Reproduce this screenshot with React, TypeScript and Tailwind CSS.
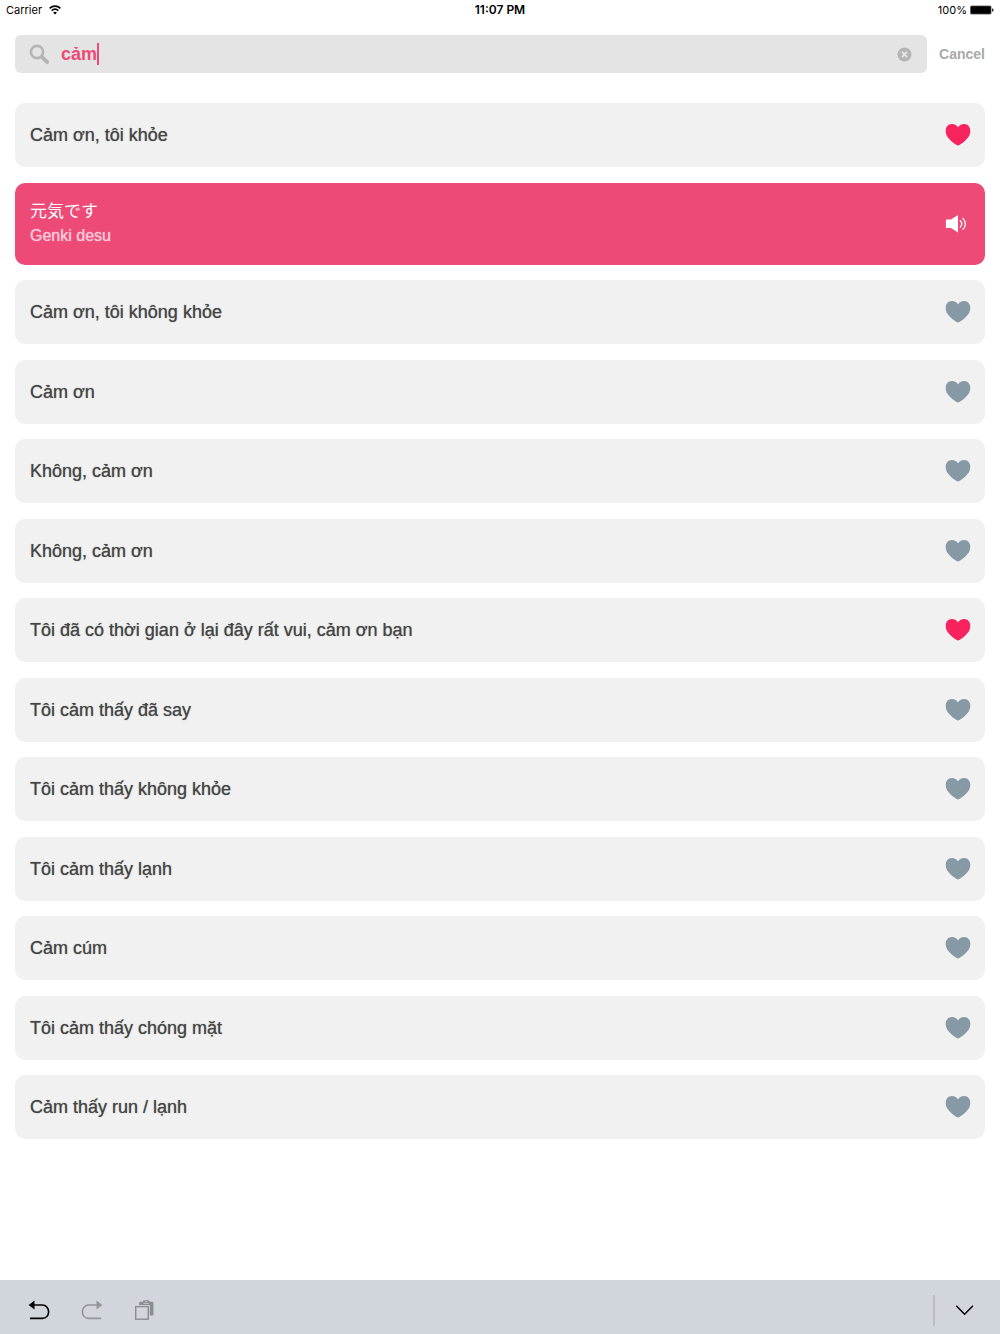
import React, { useState } from 'react';

interface Phrase {
  id: number;
  text: string;
  favorite: boolean;
  translation?: { native: string; romaji: string };
}

const initialPhrases: Phrase[] = [
  {
    id: 1,
    text: 'Cảm ơn, tôi khỏe',
    favorite: true,
    translation: { native: '元気です', romaji: 'Genki desu' },
  },
  { id: 2, text: 'Cảm ơn, tôi không khỏe', favorite: false },
  { id: 3, text: 'Cảm ơn', favorite: false },
  { id: 4, text: 'Không, cảm ơn', favorite: false },
  { id: 5, text: 'Không, cảm ơn', favorite: false },
  { id: 6, text: 'Tôi đã có thời gian ở lại đây rất vui, cảm ơn bạn', favorite: true },
  { id: 7, text: 'Tôi cảm thấy đã say', favorite: false },
  { id: 8, text: 'Tôi cảm thấy không khỏe', favorite: false },
  { id: 9, text: 'Tôi cảm thấy lạnh', favorite: false },
  { id: 10, text: 'Cảm cúm', favorite: false },
  { id: 11, text: 'Tôi cảm thấy chóng mặt', favorite: false },
  { id: 12, text: 'Cảm thấy run / lạnh', favorite: false },
];

const HeartIcon: React.FC = () => (
  <svg width="26" height="24" viewBox="0 0 26 24" fill="currentColor" aria-hidden="true">
    <path d="M13 22.6C11.6 22.2 8.2 20 5.4 17.2C2.4 14.2 .7 11.6 .7 7.9C.7 3.8 3.2 1 6.9 1C9.8 1 11.9 2.4 13 4.6C14.1 2.4 16.2 1 19.1 1C22.8 1 25.3 3.8 25.3 7.9C25.3 11.6 23.6 14.2 20.6 17.2C17.8 20 14.4 22.2 13 22.6Z" />
  </svg>
);

const StatusBar: React.FC = () => (
  <div className="grid h-5 grid-cols-3 items-center px-1.5 font-[Inter,sans-serif] text-[11px] leading-5 text-black">
    <div className="flex items-center gap-[7px]">
      <span>Carrier</span>
      <svg width="12" height="10" viewBox="0 0 12 10" fill="none" stroke="currentColor" strokeWidth="1.6" aria-hidden="true">
        <path d="M.6 3.4C3.7.4 8.3.4 11.4 3.4" />
        <path d="M2.6 5.6C4.6 3.8 7.4 3.8 9.4 5.6" />
        <path d="M6 9.4L4.1 7.4C5.2 6.4 6.8 6.4 7.9 7.4Z" fill="currentColor" stroke="none" />
      </svg>
    </div>
    <span className="text-center text-xs leading-5 font-semibold">11:07 PM</span>
    <div className="flex items-center justify-end gap-0.5">
      <span>100%</span>
      <svg width="25" height="10" viewBox="0 0 25 10" aria-hidden="true">
        <rect x="1" y=".5" width="21.5" height="9" rx="1.5" fill="#777" />
        <rect x="1.8" y="1.2" width="20" height="7.6" rx="1" fill="#000" />
        <path d="M23.2 3.2C25 3.6 25 6.4 23.2 6.8Z" fill="#000" />
      </svg>
    </div>
  </div>
);

const SearchBar: React.FC<{ value: string; onChange: (value: string) => void }> = ({ value, onChange }) => (
  <div className="mt-[15px] flex items-center gap-3">
    <label className="flex h-[38px] flex-1 items-center rounded-md bg-[#e4e4e4] pr-[15px] pl-3.5">
      <svg className="text-[#b4b4b4]" width="21" height="21" viewBox="0 0 21 21" fill="none" stroke="currentColor" aria-hidden="true">
        <circle cx="8" cy="8" r="6.1" strokeWidth="2.6" />
        <path d="M12.8 12.8L18.2 18.2" strokeWidth="3.8" strokeLinecap="round" />
      </svg>
      <input
        type="text"
        aria-label="Search"
        value={value}
        onChange={(e) => onChange(e.target.value)}
        className="ml-[11px] field-sizing-content bg-transparent text-lg leading-6 font-bold text-[#ed4a77] caret-transparent outline-none"
      />
      <span className="h-[22px] w-0.5 bg-[#ed4a77]" />
      <button type="button" aria-label="Clear" onClick={() => onChange('')} className="ml-auto">
        <svg width="15" height="15" viewBox="0 0 15 15" aria-hidden="true">
          <circle cx="7.5" cy="7.5" r="7" fill="#b4b4b4" />
          <path d="M4.9 4.9L10.1 10.1M10.1 4.9L4.9 10.1" stroke="#e8e8e8" strokeWidth="1.7" />
        </svg>
      </button>
    </label>
    <button type="button" onClick={() => onChange('')} className="text-sm leading-5 font-bold text-[#a9a9a9]">
      Cancel
    </button>
  </div>
);

const PhraseRow: React.FC<{ phrase: Phrase; onToggle: (id: number) => void }> = ({ phrase, onToggle }) => (
  <li className="flex min-h-16 items-center justify-between rounded-[10px] bg-[#f1f1f1] pr-3.5 pl-[15px]">
    <span className="text-lg leading-6 font-medium text-[#444] [text-shadow:0_0_1px_#777]">{phrase.text}</span>
    <button
      type="button"
      aria-label="Favorite"
      aria-pressed={phrase.favorite}
      onClick={() => onToggle(phrase.id)}
      className={phrase.favorite ? 'text-[#f6235f]' : 'text-[#8799a5]'}
    >
      <HeartIcon />
    </button>
  </li>
);

const TranslationRow: React.FC<{ native: string; romaji: string }> = ({ native, romaji }) => (
  <li className="flex min-h-[82px] items-center justify-between rounded-[10px] bg-[#ed4a77] pr-[18px] pl-[15px] text-white">
    <div className="flex flex-col gap-0.5 pb-0.5">
      <p lang="ja" className="font-['Noto_Sans_CJK_JP',sans-serif] text-[17px] leading-6">
        {native}
      </p>
      <p className="text-base leading-6 text-[#fbc9d7] [text-shadow:0_0_1px_#fbc9d7]">{romaji}</p>
    </div>
    <button type="button" aria-label="Play">
      <svg width="22" height="20" viewBox="0 0 22 20" fill="none" stroke="currentColor" strokeWidth="1.3" strokeLinecap="round" aria-hidden="true">
        <path d="M2 5.5H6L13 1V18.6L6 14H2C1.3 14 .9 13.6 .9 12.9V6.6C.9 5.9 1.3 5.5 2 5.5Z" fill="currentColor" stroke="none" />
        <path d="M15.3 6.8C17 8.6 17 11.2 15.3 13" />
        <path d="M17.8 4.4C21.2 7.6 21.2 12.2 17.8 15.4" />
      </svg>
    </button>
  </li>
);

const KeyboardBar: React.FC = () => (
  <footer className="flex h-[54px] items-center bg-[#d1d5dc] pt-1.5 pr-[25px] pl-7">
    <button type="button" aria-label="Undo" className="text-black">
      <svg width="22" height="20" viewBox="0 0 22 20" fill="none" stroke="currentColor" strokeWidth="1.6" aria-hidden="true">
        <path d="M5 5H14.3C18 5 20.6 8 20.6 11.8C20.6 15.6 18 18.4 14.3 18.4H2" />
        <path d="M6.5 .6V9.4L.6 5Z" fill="currentColor" stroke="none" />
      </svg>
    </button>
    <button type="button" aria-label="Redo" className="ml-[31px] text-[#939598]">
      <svg width="22" height="20" viewBox="0 0 22 20" fill="none" stroke="currentColor" strokeWidth="1.6" aria-hidden="true">
        <path d="M16 5H7.7C4 5 1.4 8 1.4 11.8C1.4 15.6 4 18.4 7.7 18.4H20" />
        <path d="M15.5 .6V9.4L21.4 5Z" fill="currentColor" stroke="none" />
      </svg>
    </button>
    <button type="button" aria-label="Paste" className="ml-[31px] text-[#8b8d90]">
      <svg width="20" height="20" viewBox="0 0 20 20" fill="none" stroke="currentColor" aria-hidden="true">
        <rect x="1.7" y="6.6" width="12.6" height="12.6" strokeWidth="1.4" />
        <path d="M5.2 5V3C5.2 2.3 5.7 1.8 6.4 1.8H9V1.4C9 .7 9.5 .2 10.2 .2H14.2C14.9 .2 15.4 .7 15.4 1.4V1.8H18.2C18.9 1.8 19.4 2.3 19.4 3V15.6H15.8V5Z" fill="currentColor" stroke="none" />
        <path d="M9.4 3.4H14.8M11.2 1.5H13.2" stroke="#d1d5dc" strokeWidth=".8" />
      </svg>
    </button>
    <span className="ml-auto h-[31px] w-0.5 bg-[#bcbdc1]" />
    <button type="button" aria-label="Hide keyboard" className="ml-5 text-black">
      <svg width="20" height="12" viewBox="0 0 20 12" fill="none" stroke="currentColor" strokeWidth="1.5" aria-hidden="true">
        <path d="M1.2 1.8L9.6 10.2L18 1.8" />
      </svg>
    </button>
  </footer>
);

/**
 * Phrase search screen
 */
const App: React.FC = () => {
  const [query, setQuery] = useState<string>('cảm');
  const [phrases, setPhrases] = useState<Phrase[]>(initialPhrases);

  const results = phrases.filter((p) => p.text.toLowerCase().includes(query.toLowerCase()));

  const handleToggle = (id: number) => {
    setPhrases((prev) => prev.map((p) => (p.id === id ? { ...p, favorite: !p.favorite } : p)));
  };

  return (
    <div className="flex min-h-screen flex-col bg-white font-['Liberation_Sans',Arial,sans-serif]">
      <StatusBar />
      <main className="flex flex-1 flex-col px-[15px] pb-[141px]">
        <SearchBar value={query} onChange={setQuery} />
        <ul className="mt-[30px] flex flex-1 flex-col justify-between gap-3">
          {results.map((phrase) => (
            <React.Fragment key={phrase.id}>
              <PhraseRow phrase={phrase} onToggle={handleToggle} />
              {phrase.translation && <TranslationRow {...phrase.translation} />}
            </React.Fragment>
          ))}
        </ul>
      </main>
      <KeyboardBar />
    </div>
  );
};

export default App;
